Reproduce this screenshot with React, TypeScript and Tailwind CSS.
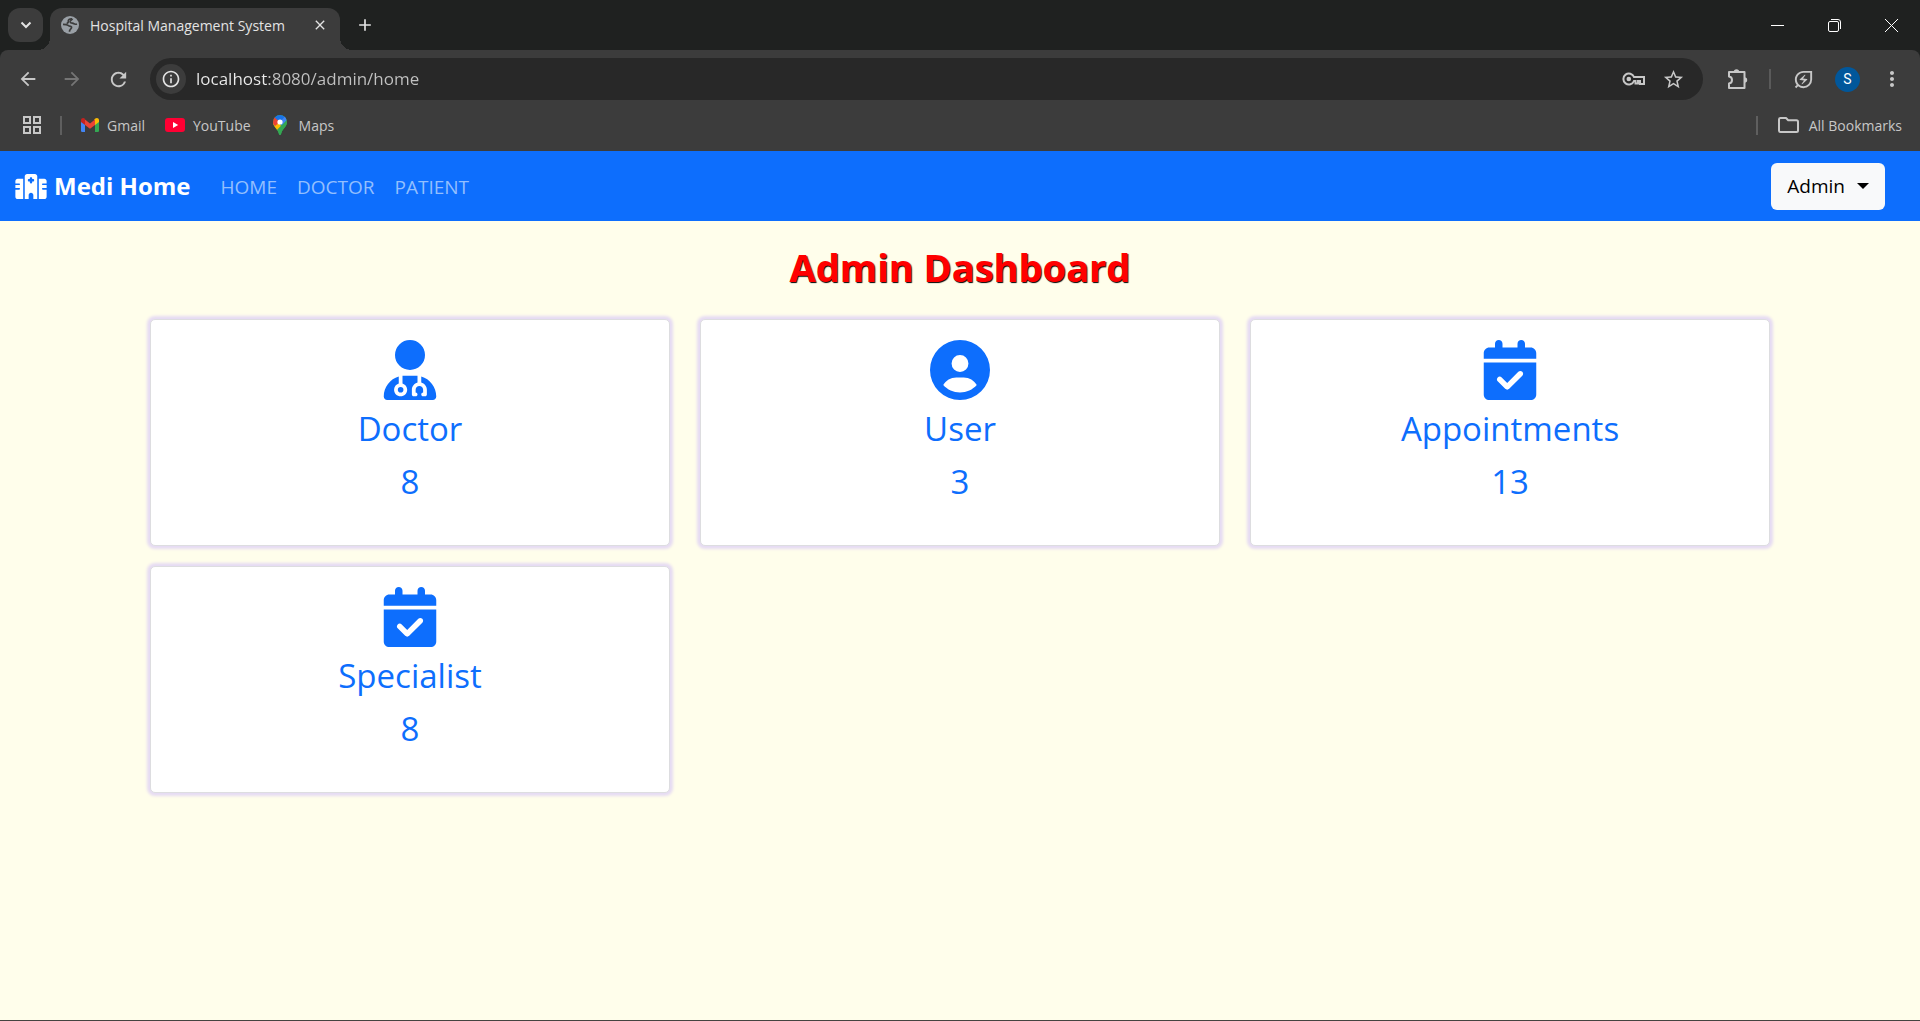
import type { ReactNode } from "react";
import { FaCalendarCheck, FaCircleUser, FaHospital, FaUserDoctor } from "react-icons/fa6";
import {
  MdAdd,
  MdArrowBack,
  MdArrowForward,
  MdClose,
  MdMoreVert,
  MdOutlineEnergySavingsLeaf,
  MdOutlineInfo,
  MdRefresh,
  MdStarOutline,
} from "react-icons/md";

function Globe() {
  return (
    <svg viewBox="0 0 18 18" className="size-[18px]" fill="none" aria-hidden="true">
      <circle cx="9" cy="9" r="9" fill="#9aa0a6" />
      <path
        d="M11 2.800C8.500 2.600 7 3.800 7.300 5.300c.3 1.300-.6 1.800-1.600 2M2 8.300c2.500 0 4.300.2 5.200 1.200.8 1 2.600.3 3.300 1.500.6 1.200-.8 1.700-1.300 2.500-.5.700-.7 1.300-.7 2.300M11.500 2.700c-.3 1.500-2.700 1.600-2.300 3.200.5 1.600 2.500 1 3.600 1.800.9.700 2 .7 3.200.3"
        stroke="#3c3c3c"
        strokeWidth="1.700"
      />
    </svg>
  );
}

function KeyIcon() {
  return (
    <svg viewBox="0 0 23 14" className="h-[14px] w-[23px]" fill="none" stroke="currentColor" strokeWidth="2" aria-hidden="true">
      <path d="M12 5h10v7h-4V9h-2v2.500h-2.500V9H12A5.500 5.500 0 1 1 12 5z" />
      <circle cx="6.800" cy="7" r="2.300" fill="currentColor" stroke="none" />
    </svg>
  );
}

function PuzzleIcon() {
  return (
    <svg viewBox="0 0 21 20" className="h-5 w-[21px]" fill="none" stroke="currentColor" strokeWidth="2" strokeLinejoin="round" aria-hidden="true">
      <path d="M2 3h15.500v16H2v-4.500c4-.5 4-6.500 0-7z" />
      <path d="M6.800 3a2.700 2.700 0 0 1 5.400 0zM17.500 8.300a2.700 2.700 0 0 1 0 5.400z" fill="currentColor" stroke="none" />
    </svg>
  );
}

function FolderIcon() {
  return (
    <svg viewBox="0 0 21 16" className="h-4 w-[21px]" fill="none" stroke="currentColor" strokeWidth="2" strokeLinejoin="round" aria-hidden="true">
      <path d="M1 2.500A1.500 1.500 0 0 1 2.500 1H8l2.200 2.300h8.300A1.500 1.500 0 0 1 20 4.800v8.700a1.500 1.500 0 0 1-1.500 1.500h-16A1.500 1.500 0 0 1 1 13.500z" />
    </svg>
  );
}

function GmailLogo() {
  return (
    <svg viewBox="0 0 18 14" className="h-[14px] w-[18px]" aria-hidden="true">
      <path d="M0 3v9.800A1.200 1.200 0 0 0 1.200 14H4V6z" fill="#4285f4" />
      <path d="M18 3v9.800a1.200 1.200 0 0 1-1.200 1.200H14V6z" fill="#34a853" />
      <path d="M14 2v5l4-3V2.200C18 .2 15.800-.6 14.300.6L13 1.600z" fill="#fbbc04" />
      <path d="M4 7V1.600l5 3.800 5-3.800V7l-5 3.800z" fill="#ea4335" />
      <path d="M0 2.200V4l4 3V1.600L3.700.6C2.200-.6 0 .2 0 2.200z" fill="#c5221f" />
    </svg>
  );
}

function YouTubeLogo() {
  return (
    <svg viewBox="0 0 20 14" className="h-[14px] w-[20px]" aria-hidden="true">
      <rect width="20" height="14" rx="3" fill="#ff0033" />
      <path d="M8 4v6l5.200-3z" fill="#fff" />
    </svg>
  );
}

function MapsLogo() {
  return (
    <svg viewBox="0 0 14 20" className="h-[20px] w-[14px]" aria-hidden="true">
      <clipPath id="pin">
        <path d="M7 0a7 7 0 0 1 7 7c0 4.500-4.200 6-5.800 11.500C8 19.300 7.600 20 7 20s-1-.7-1.200-1.500C4.200 13 0 11.500 0 7a7 7 0 0 1 7-7z" />
      </clipPath>
      <g clipPath="url(#pin)">
        <rect width="14" height="20" fill="#34a853" />
        <path d="M0 7.500 5 6l3 5-4.500 5L0 13z" fill="#fbbc04" />
        <path d="M-1 8V1l3 1 5 5-5 4z" fill="#ea4335" />
        <path d="M1.600 2.500 5 -1h9v4L7 7z" fill="#1a73e8" />
        <path d="M7 7 12 1.500 14 5l-5 6z" fill="#4285f4" />
        <path d="M14 5v15H6l-3-4z" fill="#34a853" />
      </g>
      <circle cx="7" cy="7" r="2.600" fill="#fff" />
    </svg>
  );
}

function AppsGrid() {
  return (
    <svg viewBox="0 0 18 18" className="size-[18px]" fill="none" stroke="currentColor" strokeWidth="2" aria-hidden="true">
      <rect x="1" y="1" width="6" height="6" />
      <rect x="11" y="1" width="6" height="6" />
      <rect x="1" y="11" width="6" height="6" />
      <rect x="11" y="11" width="6" height="6" />
    </svg>
  );
}

function IconButton({ label, className = "", children }: { label: string; className?: string; children: ReactNode }) {
  return (
    <button type="button" aria-label={label} className={`flex shrink-0 items-center justify-center ${className}`}>
      {children}
    </button>
  );
}

function TabStrip() {
  return (
    <div className="flex h-[50px] items-start bg-[#1f2120] pt-2 pl-2 text-[#e3e3e3]">
      <IconButton label="Search tabs" className="h-[34px] w-[35px] rounded-xl bg-[#3c3c3c]">
        <svg viewBox="0 0 12 8" className="h-2 w-3" fill="none" stroke="currentColor" strokeWidth="2" aria-hidden="true">
          <path d="M1.500 1.500 6 6l4.500-4.500" />
        </svg>
      </IconButton>
      <div className="relative ml-[7px] flex h-[42px] w-[290px] items-center rounded-t-xl bg-[#3c3c3c] pr-3 pb-2 pl-[11px]">
        <span className="absolute bottom-0 -left-3 size-3 bg-[radial-gradient(circle_at_0_0,transparent_12px,#3c3c3c_12px)]" />
        <span className="absolute -right-3 bottom-0 size-3 bg-[radial-gradient(circle_at_100%_0,transparent_12px,#3c3c3c_12px)]" />
        <Globe />
        <span className="ml-[11px] flex-1 text-[14px] whitespace-nowrap">Hospital Management System</span>
        <IconButton label="Close tab" className="size-4">
          <MdClose className="size-4" />
        </IconButton>
      </div>
      <IconButton label="New tab" className="ml-2 size-[34px]">
        <MdAdd className="size-5" />
      </IconButton>
      <div className="ml-auto flex h-[34px] items-center text-white">
        <IconButton label="Minimize" className="w-[57px]">
          <svg viewBox="0 0 13 13" className="size-[13px]" stroke="currentColor" aria-hidden="true">
            <path d="M0 6.500h13" />
          </svg>
        </IconButton>
        <IconButton label="Restore" className="w-[57px]">
          <svg viewBox="0 0 13 13" className="size-[13px]" fill="none" stroke="currentColor" aria-hidden="true">
            <rect x=".5" y="2.500" width="10" height="10" rx="1.500" />
            <path d="M3 .5h7a2.500 2.500 0 0 1 2.500 2.500v7" />
          </svg>
        </IconButton>
        <IconButton label="Close" className="w-[57px]">
          <svg viewBox="0 0 13 13" className="size-[13px]" stroke="currentColor" aria-hidden="true">
            <path d="m0 0 13 13M13 0 0 13" />
          </svg>
        </IconButton>
      </div>
    </div>
  );
}

function Toolbar() {
  return (
    <div className="bg-[#1f2120]">
      <div className="flex h-[58px] items-center rounded-t-lg bg-[#3c3c3c] px-4 text-[#c7c7c7]">
        <IconButton label="Back" className="size-6">
          <MdArrowBack className="size-[22px]" />
        </IconButton>
        <IconButton label="Forward" className="ml-5 size-6 text-[#757575]">
          <MdArrowForward className="size-[22px]" />
        </IconButton>
        <IconButton label="Reload" className="ml-[22px] size-6">
          <MdRefresh className="size-[23px]" />
        </IconButton>
        <div className="ml-5 flex h-[42px] flex-1 items-center rounded-full bg-[#282828] pr-[18px] pl-[6px]">
          <IconButton label="View site information" className="size-[30px] rounded-full bg-[#3c3c3c] text-[#e3e3e3]">
            <MdOutlineInfo className="size-5" />
          </IconButton>
          <input
            aria-label="Address"
            defaultValue="localhost:8080/admin/home"
            className="ml-[10px] flex-1 bg-[linear-gradient(90deg,#ececec_72px,#c2c2c2_72px)] bg-clip-text text-[17px] text-transparent outline-none"
          />
          <IconButton label="Passwords" className="size-6">
            <KeyIcon />
          </IconButton>
          <IconButton label="Bookmark this tab" className="ml-4 size-6">
            <MdStarOutline className="size-[23px]" />
          </IconButton>
        </div>
        <IconButton label="Extensions" className="ml-[22px] size-6">
          <PuzzleIcon />
        </IconButton>
        <span className="ml-5 h-5 w-[2px] bg-[#5a5a5a]" />
        <IconButton label="Energy saver" className="ml-5 size-6">
          <MdOutlineEnergySavingsLeaf className="size-[23px]" />
        </IconButton>
        <IconButton label="Profile" className="ml-5 size-[25px] rounded-full bg-[#01579b] font-['Roboto'] text-[14px] text-white">
          S
        </IconButton>
        <IconButton label="Menu" className="ml-5 size-6">
          <MdMoreVert className="size-[26px]" />
        </IconButton>
      </div>
    </div>
  );
}

function BookmarksBar() {
  return (
    <div className="flex h-[43px] items-center bg-[#3c3c3c] pr-[18px] pb-[9px] pl-[23px] text-[14px] text-[#c7c7c7]">
      <IconButton label="Apps">
        <AppsGrid />
      </IconButton>
      <span className="ml-[19px] h-[19px] w-[2px] bg-[#5f5f5f]" />
      <a href="#gmail" className="ml-[19px] flex items-center gap-2">
        <GmailLogo />
        Gmail
      </a>
      <a href="#youtube" className="ml-5 flex items-center gap-2">
        <YouTubeLogo />
        YouTube
      </a>
      <a href="#maps" className="ml-[22px] flex items-center gap-3">
        <MapsLogo />
        Maps
      </a>
      <span className="ml-auto h-[19px] w-[2px] bg-[#5f5f5f]" />
      <button type="button" className="ml-5 flex items-center gap-[10px]">
        <FolderIcon />
        All Bookmarks
      </button>
    </div>
  );
}

function Navbar() {
  return (
    <nav className="flex h-[70px] items-center bg-[#0d6efd] pr-[35px] pl-[15px] text-[19px]">
      <a href="#medi-home" className="flex items-center gap-[7px] text-[24px] font-bold text-white">
        <FaHospital className="h-[25px] w-8" />
        Medi Home
      </a>
      <div className="ml-[30px] flex gap-5 pt-[2px] text-[#93bffe]">
        <a href="#home">HOME</a>
        <a href="#doctor">DOCTOR</a>
        <a href="#patient">PATIENT</a>
      </div>
      <button type="button" className="ml-auto flex h-[47px] items-center gap-3 rounded-md bg-[#f8f9fa] px-4 text-black">
        Admin
        <span className="border-x-[6px] border-t-[6px] border-x-transparent border-t-black" />
      </button>
    </nav>
  );
}

const cards = [
  { title: "Doctor", count: 8, Icon: FaUserDoctor },
  { title: "User", count: 3, Icon: FaCircleUser },
  { title: "Appointments", count: 13, Icon: FaCalendarCheck },
  { title: "Specialist", count: 8, Icon: FaCalendarCheck },
];

export default function App() {
  return (
    <div className="flex min-h-screen flex-col border-b border-[#444440] bg-[#fffeeb] font-['Open_Sans','Noto_Sans',sans-serif]">
      <header>
        <TabStrip />
        <Toolbar />
        <BookmarksBar />
      </header>
      <Navbar />
      <main className="mx-auto w-full max-w-[1650px] px-[15px] pt-[22px]">
        <h1 className="text-center text-[38px] leading-[48px] font-bold text-[#ff0000] [text-shadow:1px_1px_1px_#000000]">
          Admin Dashboard
        </h1>
        <div className="mt-7 grid grid-cols-3 gap-x-[30px] gap-y-5">
          {cards.map(({ title, count, Icon }) => (
            <section
              key={title}
              className="flex h-[227px] flex-col items-center rounded-[5px] border border-[#dddde0] bg-white pt-5 text-[33px] leading-[53px] text-[#0d6efd] shadow-[0_0_3px_3px_#e6dbf3]"
            >
              <Icon className="mb-[2px] size-[60px]" />
              <h2>{title}</h2>
              <p>{count}</p>
            </section>
          ))}
        </div>
      </main>
    </div>
  );
}
